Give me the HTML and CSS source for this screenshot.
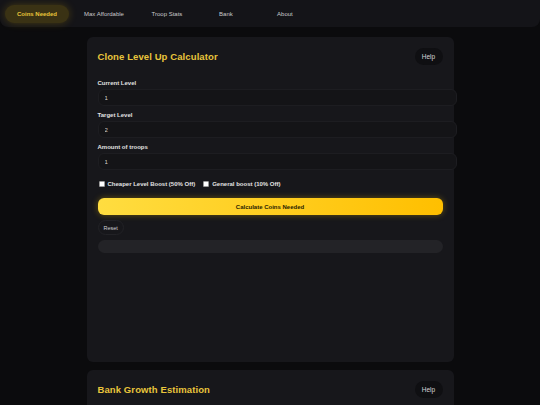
FILE: index.html
```html
<!DOCTYPE html>
<html lang="en">
<head>
    <meta charset="UTF-8">
    <meta name="viewport" content="width=device-width, initial-scale=1.0">
    <title>Clone Calculator</title>
    <link rel="stylesheet" href="styles.css">
</head>
<body>
    <nav class="topnav">
        <a class="nav-item active" href="#">Coins Needed</a>
        <a class="nav-item" href="#">Max Affordable</a>
        <a class="nav-item" href="#">Troop Stats</a>
        <a class="nav-item" href="#">Bank</a>
        <a class="nav-item" href="#">About</a>
    </nav>

    <main class="page">
        <section class="card card-tall">
            <div class="card-head">
                <h2>Clone Level Up Calculator</h2>
                <button class="help-btn">Help</button>
            </div>

            <label class="field-label" for="currentLevel">Current Level</label>
            <input type="text" id="currentLevel" value="1">

            <label class="field-label" for="targetLevel">Target Level</label>
            <input type="text" id="targetLevel" value="2">

            <label class="field-label" for="troops">Amount of troops</label>
            <input type="text" id="troops" value="1">

            <div class="checks">
                <label><input type="checkbox" id="cheaperBoost"> Cheaper Level Boost (50% Off)</label>
                <label><input type="checkbox" id="generalBoost"> General boost (10% Off)</label>
            </div>

            <button class="calc-btn" id="calcButton">Calculate Coins Needed</button>
            <button class="reset-btn" id="resetButton">Reset</button>

            <div class="result" id="result"></div>
        </section>

        <section class="card">
            <div class="card-head">
                <h2>Bank Growth Estimation</h2>
                <button class="help-btn">Help</button>
            </div>
        </section>
    </main>
</body>
</html>
```

FILE: styles.css
```css
body {
    margin: 0;
    background-color: #0b0b0d;
    font-family: 'Liberation Sans', Arial, sans-serif;
    color: #e2e2e2;
}

.topnav {
    display: flex;
    gap: 3px;
    height: 27px;
    padding: 5px 5px 0 5px;
    box-sizing: border-box;
    background-color: #141418;
    border-radius: 0 0 8px 8px;
}

.nav-item {
    display: flex;
    align-items: center;
    justify-content: center;
    height: 18px;
    min-width: 56px;
    padding: 0 12px;
    box-sizing: border-box;
    font-size: 6px;
    color: #c9c9cc;
    text-decoration: none;
    border-radius: 9px;
}

.nav-item.active {
    background-color: #3a3214;
    color: #e8c53a;
    font-weight: bold;
    box-shadow: 0 0 8px rgba(255, 200, 0, 0.22);
}

.page {
    display: flex;
    flex-direction: column;
    align-items: center;
    gap: 8px;
    padding-top: 10px;
}

.card {
    width: 367px;
    padding: 11px;
    box-sizing: border-box;
    background-color: #17171b;
    border-radius: 6px;
}

.card-tall {
    height: 325px;
}

.card-head {
    display: flex;
    justify-content: space-between;
    align-items: center;
    margin-bottom: 14px;
}

.card-head h2 {
    margin: 0;
    font-size: 9.5px;
    color: #e9c53c;
    letter-spacing: 0.1px;
}

.help-btn {
    height: 17px;
    width: 28px;
    padding: 0;
    font-family: inherit;
    font-size: 6.5px;
    color: #d6d6d9;
    background-color: #0f0f12;
    border: none;
    border-radius: 9px;
}

.field-label {
    display: block;
    height: 8px;
    line-height: 8px;
    margin-bottom: 2px;
    font-size: 6px;
    font-weight: bold;
}

input[type="text"] {
    display: block;
    width: 100%;
    height: 15px;
    padding: 0 6px;
    margin: 0 0 5px 0;
    font-family: inherit;
    font-size: 6px;
    color: #cfcfd2;
    background-color: #141417;
    border: 1px solid #1d1d21;
    border-radius: 6px;
    outline: none;
}

.checks {
    display: flex;
    gap: 7px;
    height: 8px;
    margin-top: 10px;
    font-size: 6px;
    font-weight: bold;
}

.checks label {
    display: flex;
    align-items: center;
    gap: 3px;
}

.checks input[type="checkbox"] {
    appearance: none;
    width: 6px;
    height: 6px;
    margin: 0 0 0 1px;
    background-color: #ffffff;
    border: 1px solid #9a9a9a;
    border-radius: 1px;
}

.calc-btn {
    display: block;
    width: 100%;
    height: 17px;
    margin-top: 10px;
    font-family: inherit;
    font-size: 6px;
    font-weight: bold;
    color: #2a2100;
    background: linear-gradient(90deg, #ffdd40, #ffbf00);
    border: none;
    border-radius: 6px;
    box-shadow: 0 0 6px rgba(255, 200, 0, 0.35);
}

.reset-btn {
    display: block;
    height: 15px;
    padding: 0 5px;
    margin-top: 5px;
    font-family: inherit;
    font-size: 5.5px;
    color: #cfcfd2;
    background-color: #17171b;
    border: 1px solid #222226;
    border-radius: 8px;
}

.result {
    height: 13px;
    margin-top: 5px;
    background-color: #232327;
    border-radius: 7px;
}
```
